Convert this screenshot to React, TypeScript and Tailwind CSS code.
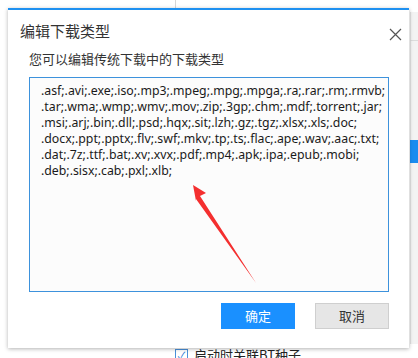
const EXTS = [
  '.asf;.avi;.exe;.iso;.mp3;.mpeg;.mpg;.mpga;.ra;.rar;.rm;.rmvb;',
  '.tar;.wma;.wmp;.wmv;.mov;.zip;.3gp;.chm;.mdf;.torrent;.jar;',
  '.msi;.arj;.bin;.dll;.psd;.hqx;.sit;.lzh;.gz;.tgz;.xlsx;.xls;.doc;',
  '.docx;.ppt;.pptx;.flv;.swf;.mkv;.tp;.ts;.flac;.ape;.wav;.aac;.txt;',
  '.dat;.7z;.ttf;.bat;.xv;.xvx;.pdf;.mp4;.apk;.ipa;.epub;.mobi;',
  '.deb;.sisx;.cab;.pxl;.xlb;',
]

const FONT = "font-['Microsoft_YaHei','Noto_Sans','Noto_Sans_CJK_SC',sans-serif]"

export default function App() {
  return (
    <div className={`relative w-[418px] h-[358px] overflow-hidden bg-white ${FONT}`}>
      {/* Background window bits */}
      <div className="absolute left-[175px] top-0 w-px h-[8px] bg-[#d6d6d6]" />
      <div className="absolute left-[410px] top-[12px] w-[8px] h-[346px] bg-[#f3f3f3] border-l border-[#e2e2e2]" />
      <div className="absolute left-[410px] top-[40px] w-[8px] h-px bg-[#dcdcdc]" />
      <div className="absolute left-[410px] top-[140px] w-[8px] h-[23px] bg-[#1a8cf0]" />
      <div className="absolute left-[336px] top-[344px] w-[82px] h-[14px] bg-white" />
      <div className="absolute left-[175px] top-[348px] flex items-center gap-[6px]">
        <span className="w-[13px] h-[13px] border border-[#4a90d9] bg-white text-[#2a7ad4] text-[11px] leading-[11px] flex items-center justify-center">✓</span>
        <span className="text-[13px] text-[#222] font-['Noto_Sans_CJK_SC',sans-serif] leading-[14px]">启动时关联BT种子</span>
      </div>

      {/* Dialog */}
      <div className="absolute left-[8px] top-[8px] w-[401px] h-[340px] bg-white border-t-2 border-[#1e90f0] shadow-[0_1px_4px_rgba(0,0,0,0.3)] flex flex-col">
        <div className="flex items-start justify-between pl-[12px] pr-[6px] pt-[12px]">
          <span className="text-[15px] leading-[18px] text-[#333] font-['Noto_Sans_CJK_SC',sans-serif]">编辑下载类型</span>
          <svg width="13" height="13" viewBox="0 0 13 13" className="mt-[6px] mr-[1px]">
            <path d="M1 1L12 12M12 1L1 12" stroke="#555" strokeWidth="1.2" />
          </svg>
        </div>
        <div className="pl-[21px] pt-[10px] text-[13px] leading-[16px] text-[#333] font-['Noto_Sans_CJK_SC',sans-serif]">
          您可以编辑传统下载中的下载类型
        </div>
        <div className="ml-[21px] mt-[10px] w-[360px] h-[215px] border border-[#3d92dc] bg-[#fcfcfc] pl-[11px] pt-[5px]">
          {EXTS.map((l) => (
            <div key={l} className="text-[12.3px] leading-[16px] text-[#1a1a1a] whitespace-nowrap">{l}</div>
          ))}
        </div>
        <div className="flex justify-end gap-[20px] pr-[20px] mt-[11px]">
          <button className="w-[74px] h-[26px] bg-[#1a90ff] text-white text-[13px] font-['Noto_Sans_CJK_SC',sans-serif]">确定</button>
          <button className="w-[74px] h-[26px] bg-[#e6e6e6] border border-[#cfcfcf] text-[#333] text-[13px] font-['Noto_Sans_CJK_SC',sans-serif]">取消</button>
        </div>
      </div>

      {/* Red arrow annotation */}
      <svg className="absolute left-0 top-0 pointer-events-none" width="418" height="358">
        <path d="M193 185 L206 193 L200 196 L256 283 L196 199 L196 201 Z" fill="#f42f2f" />
      </svg>
    </div>
  )
}
